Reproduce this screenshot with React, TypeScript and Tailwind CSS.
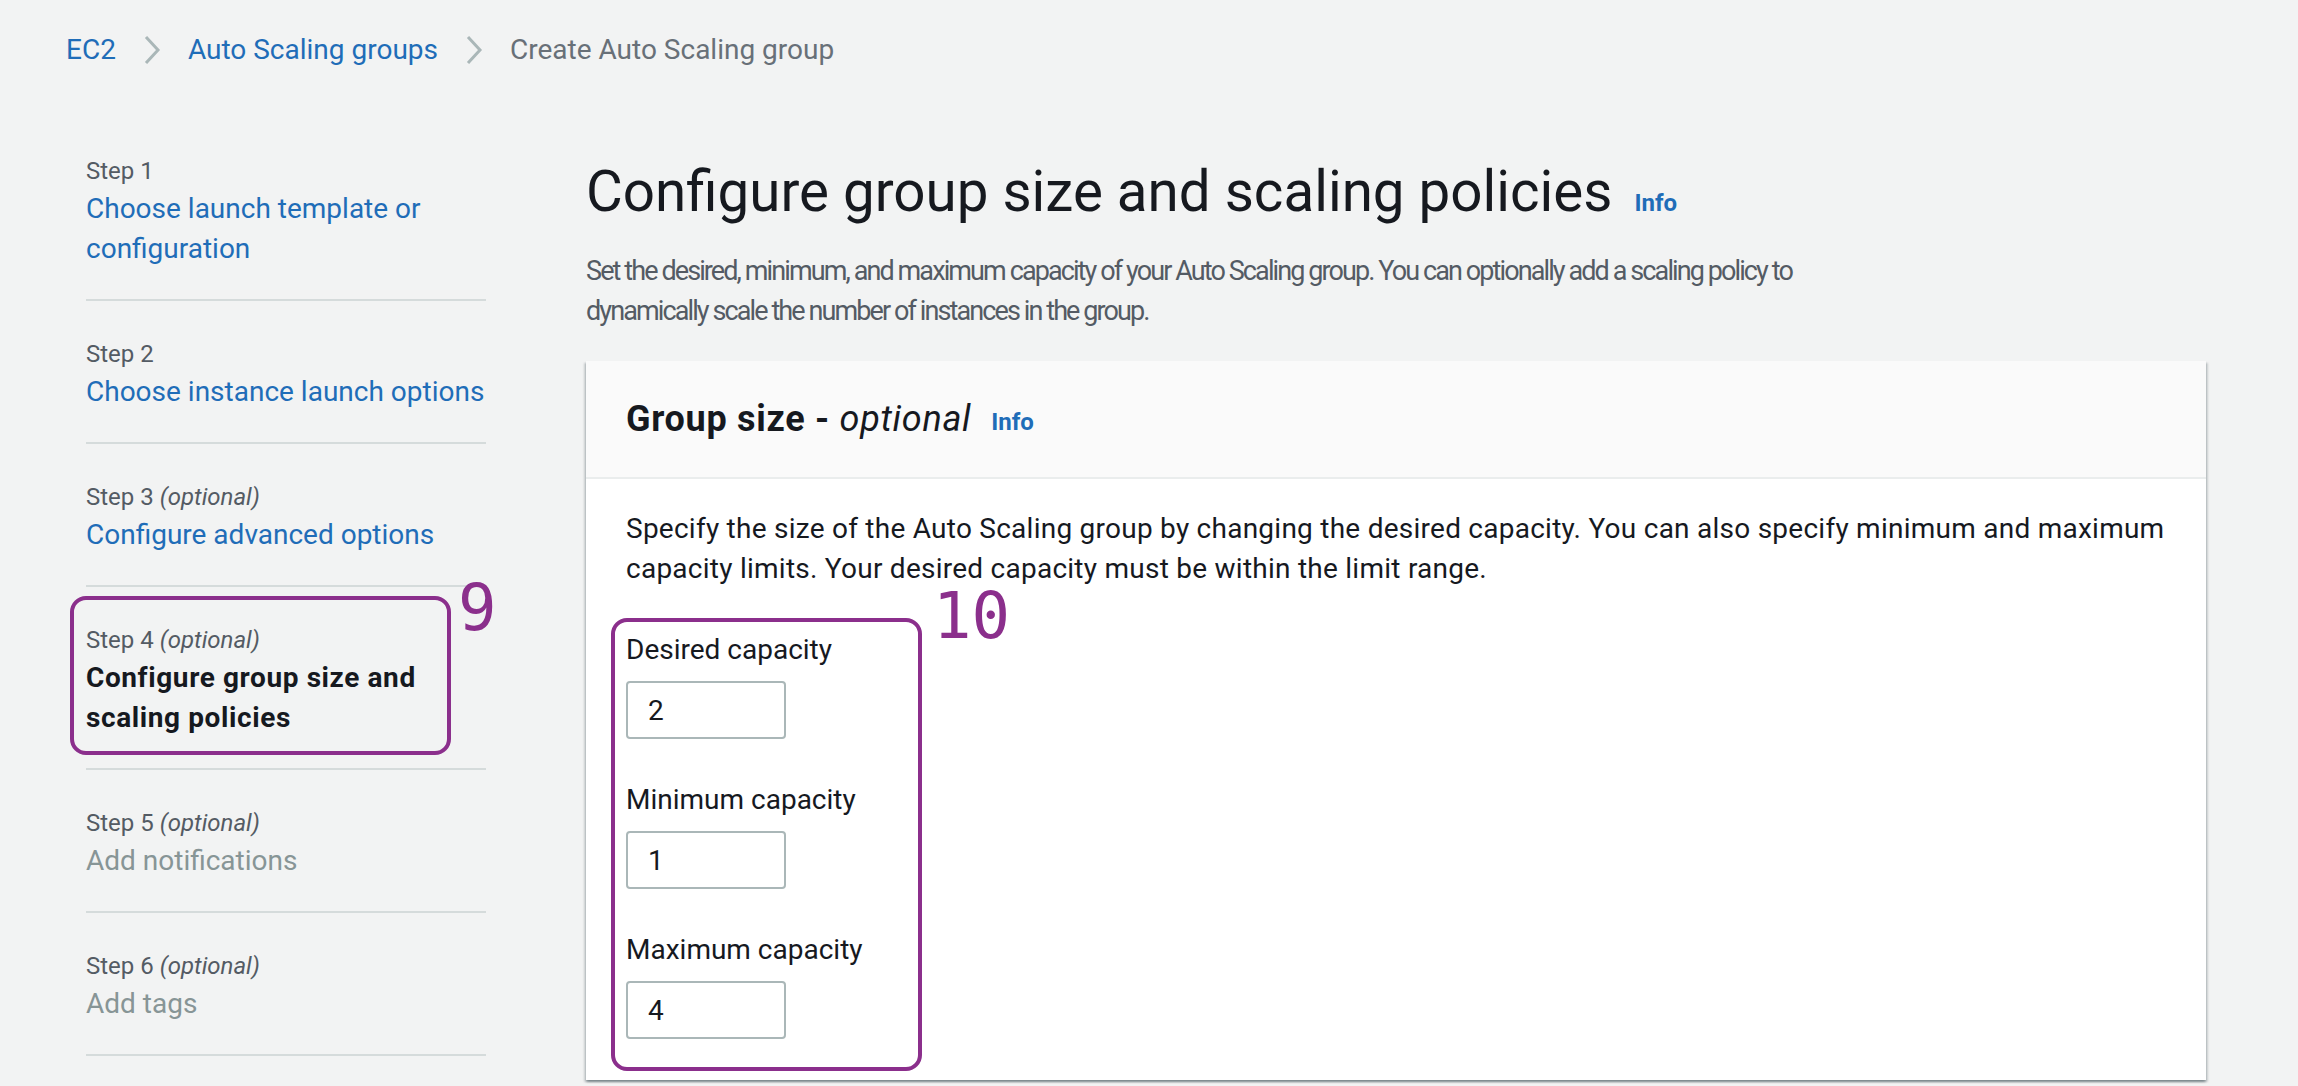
import type { ReactNode } from "react"

function Chevron() {
  return (
    <svg width="20" height="32" viewBox="0 0 20 32" className="mx-[26px] shrink-0">
      <polyline points="4,3 16,16 4,29" fill="none" stroke="#aab7b8" strokeWidth="3" />
    </svg>
  )
}

function Callout({ label, className, labelClass }: { label: string; className: string; labelClass: string }) {
  return (
    <div className={`pointer-events-none absolute rounded-[16px] border-[4px] border-[#8b2f8c] ${className}`}>
      <span
        className={`absolute font-['DejaVu_Sans_Mono',monospace] text-[64px] leading-none text-[#8b2f8c] ${labelClass}`}
      >
        {label}
      </span>
    </div>
  )
}

const linkStyles = {
  link: "text-[#1f6db8]",
  current: "font-bold tracking-[0.6px] text-[#16191f]",
  disabled: "text-[#879596]",
}

interface StepProps {
  n: number
  optional?: boolean
  state: "link" | "current" | "disabled"
  children: ReactNode
  mark?: boolean
}

function Step({ n, optional, state, children, mark }: StepProps) {
  return (
    <li className="relative border-b-2 border-[#d5dbdb] pt-[35px] pb-[30px]">
      <div className="text-[24px] leading-[36px] text-[#545b64]">
        Step {n}
        {optional && (
          <>
            {" "}
            <i>(optional)</i>
          </>
        )}
      </div>
      <div className={`whitespace-nowrap text-[28px] leading-[40px] ${linkStyles[state]}`}>{children}</div>
      {mark && <Callout label="9" className="left-[-16px] top-[9px] h-[159px] w-[381px]" labelClass="left-[384px] top-[-24px]" />}
    </li>
  )
}

function Field({ label, value }: { label: string; value: string }) {
  return (
    <div>
      <div className="text-[28px] leading-[40px] text-[#16191f]">{label}</div>
      <input
        readOnly
        value={value}
        className="mt-[11px] h-[58px] w-[160px] rounded-[4px] border-2 border-[#aab7b8] bg-white pl-[20px] text-[28px] text-[#16191f] outline-none"
      />
    </div>
  )
}

export default function App() {
  return (
    <div className="min-h-screen bg-[#f2f3f3] font-['Roboto',sans-serif] text-[#16191f]">
      {/* breadcrumbs */}
      <nav className="flex items-center pl-[66px] pt-[30px] text-[28px] leading-[40px]">
        <span className="text-[#1f6db8]">EC2</span>
        <Chevron />
        <span className="text-[#1f6db8]">Auto Scaling groups</span>
        <Chevron />
        <span className="text-[#687078]">Create Auto Scaling group</span>
      </nav>

      <div className="flex gap-[100px] pl-[86px] pr-[92px] pt-[48px]">
        {/* wizard steps */}
        <ul className="w-[400px] shrink-0">
          <Step n={1} state="link">
            Choose launch template or
            <br />
            configuration
          </Step>
          <Step n={2} state="link">
            Choose instance launch options
          </Step>
          <Step n={3} optional state="link">
            Configure advanced options
          </Step>
          <Step n={4} optional state="current" mark>
            Configure group size and
            <br />
            scaling policies
          </Step>
          <Step n={5} optional state="disabled">
            Add notifications
          </Step>
          <Step n={6} optional state="disabled">
            Add tags
          </Step>
        </ul>

        {/* main */}
        <main className="min-w-0 flex-1">
          <div className="mt-[38px] flex items-baseline gap-[22px]">
            <h1 className="text-[56.5px] font-normal leading-[72px] text-[#16191f]">
              Configure group size and scaling policies
            </h1>
            <span className="text-[24px] font-bold text-[#1f6db8]">Info</span>
          </div>
          <p className="mt-[23px] whitespace-nowrap text-[27px] leading-[40px] tracking-[-1.9px] text-[#545b64]">
            Set the desired, minimum, and maximum capacity of your Auto Scaling group. You can optionally add a scaling
            policy to
            <br />
            dynamically scale the number of instances in the group.
          </p>

          <section className="mt-[30px] bg-white shadow-[0_2px_2px_0_rgba(0,28,36,0.3),2px_2px_2px_0_rgba(0,28,36,0.15),-2px_2px_2px_0_rgba(0,28,36,0.15)]">
            <header className="flex h-[118px] items-center gap-[20px] border-b-2 border-[#eaeded] bg-[#fafafa] px-[40px]">
              <h2 className="text-[36px] leading-[48px] tracking-[0.7px] text-[#16191f]">
                <span className="font-bold">Group size - </span>
                <i className="font-normal">optional</i>
              </h2>
              <span className="mt-[6px] text-[24px] font-bold text-[#1f6db8]">Info</span>
            </header>
            <div className="px-[40px] pb-[41px] pt-[30px]">
              <p className="text-[28px] leading-[40px] tracking-[0.25px] text-[#16191f]">
                Specify the size of the Auto Scaling group by changing the desired capacity. You can also specify minimum
                and maximum capacity limits. Your desired capacity must be within the limit range.
              </p>
              <div className="relative mt-[41px] flex flex-col gap-[41px]">
                <Field label="Desired capacity" value="2" />
                <Field label="Minimum capacity" value="1" />
                <Field label="Maximum capacity" value="4" />
                <Callout label="10" className="left-[-15px] top-[-12px] h-[453px] w-[311px]" labelClass="left-[318px] top-[-38px]" />
              </div>
            </div>
          </section>
        </main>
      </div>
    </div>
  )
}
